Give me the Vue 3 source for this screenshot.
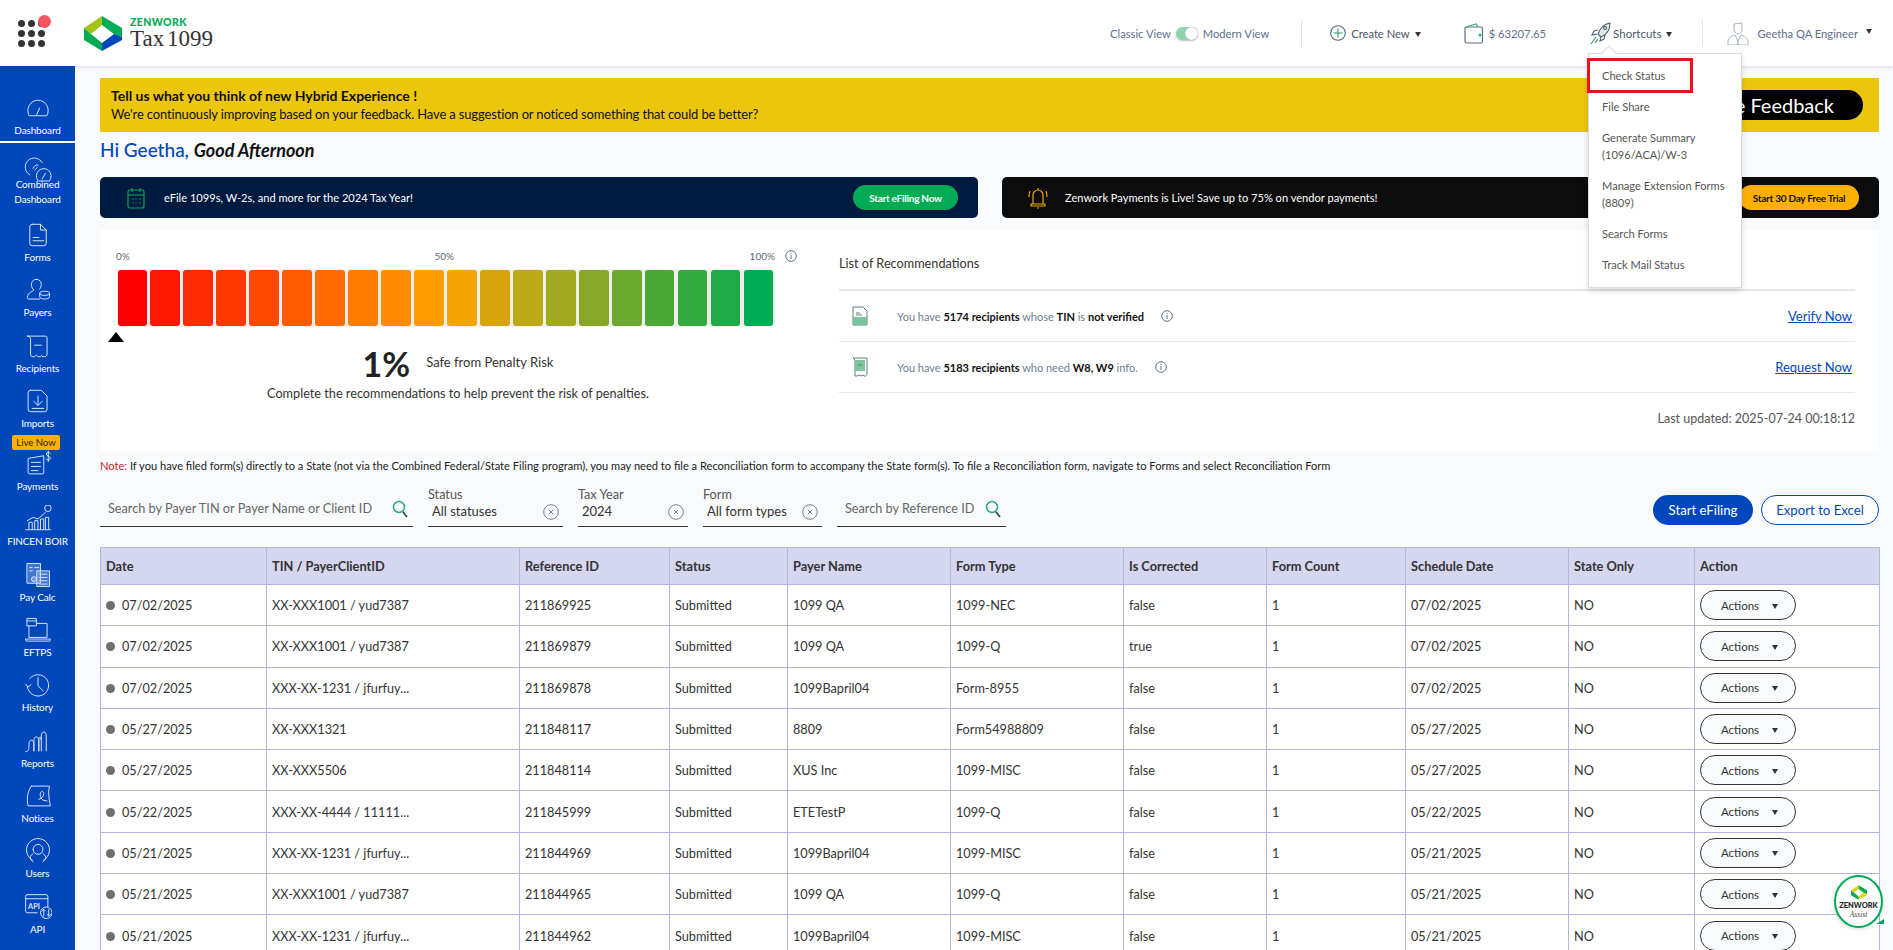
<script setup>
const dots = Array.from({ length: 9 }, (_, i) => i)

const nav = [
  { label: 'Dashboard', cls: 'first', paths: ['M5 25a12.5 12.5 0 1 1 22 0z', 'M14.5 24l3.5-8'] },
  { label: 'Combined Dashboard', cls: 'combined', paths: ['M6 22a11 11 0 1 1 15-15', 'M10 14a5 5 0 0 1 6-4', 'M12 16l3-3', 'M16 29a9 9 0 1 1 14 0z', 'M21 27l4-7'] },
  { label: 'Forms', paths: ['M9 3h10l7 7v16a3 3 0 0 1-3 3H9a3 3 0 0 1-3-3V6a3 3 0 0 1 3-3z', 'M19 3v7h7', 'M10 19h7', 'M10 23h13'] },
  { label: 'Payers', paths: ['M14 3c-4 0-6 3-6 6.500 0 3 1.500 5 3 6.500-1 2-7 2-8 9 0 1 .5 2 2 2h13', 'M14 3c4 0 6 3 6 6.500 0 2-1 4-2 5.500', 'M18 20a6 2.500 0 1 0 12 0a6 2.500 0 1 0-12 0', 'M18 20v4c0 2 3 3 6 3s6-1 6-3v-4'] },
  { label: 'Recipients', paths: ['M3 4h22a2 2 0 0 1 2 2v20c0 2-1 3-3 3h-2', 'M3 4c3 0 4 2 4 4v18c0 2 1 3 3 3h2c1-2 3-2 4 0h3c1-2 2-2 3 0', 'M12 15h8'] },
  { label: 'Imports', paths: ['M7 3h13l7 7v16a3 3 0 0 1-3 3H7a3 3 0 0 1-3-3V6a3 3 0 0 1 3-3z', 'M16 10v11', 'M11 16.500l5 5 5-5', 'M9 25h14'] },
  { label: 'Payments', cls: 'pay', paths: ['M5 9l18-3v21a2 2 0 0 1-2 1H6a2 2 0 0 1-2-2V10z', 'M8 14h11', 'M8 19h11', 'M8 24h8', 'M31 3c-1-1.500-5-1.500-5 1s5 2 5 5-4 2.500-5 1', 'M28.500 0v13'] },
  { label: 'FINCEN BOIR', paths: ['M1 29h30', 'M5 28v-8h4v8', 'M12 28v-10h4v10', 'M19 28v-12h4v12', 'M25 28v-14h4v14', 'M3 18l7-4 6 2 9-8', 'M24 3a4 4 0 1 0 8 0a4 4 0 1 0-8 0'] },
  { label: 'Pay Calc', cls: 'calc', paths: ['M3 2h16v24H3z', 'M6 7h3M6 11h3', 'M12 7h5', 'M8 21a3 3 0 1 0 6 0a3 3 0 1 0-6 0', 'M15 11h15v19H15z', 'M18 15h9M18 19h9M18 23h9M18 27h9'] },
  { label: 'EFTPS', paths: ['M5 11v14h22V8H15', 'M1 27h30v1.500a1 1 0 0 1-1 1H2a1 1 0 0 1-1-1z', 'M3 2h11v9H3z', 'M3 5h11'] },
  { label: 'History', paths: ['M6 8a13 13 0 1 1-3 10', 'M1 15l3 3.500 3.500-3', 'M16 7v10l6 6'] },
  { label: 'Reports', paths: ['M1 29c3 0 4-2 4-7s1-7 3-7 3 2 3 7v6', 'M11 28V16c0-3 1-5 3-5s3 2 3 5v12', 'M20 28V10c0-3 1-5 3-5s3 2 3 5v18M17 28V14c0-2 1-3 1.500-3S20 13 20 15'] },
  { label: 'Notices', paths: ['M8 4h22c-2 6-1 14 1 24H4C2 20 3 10 8 4z', 'M17 20c4-1 6-4 6-7 0-3-3-3-4-1-1 3 0 7 3 9l5 1'] },
  { label: 'Users', paths: ['M9 27a14 14 0 1 1 14 0', 'M10 14a6 6 0 1 1 12 0a6 6 0 1 1-12 0', 'M10 19c-3 2-4 5-3 7l3 3', 'M22 19c3 2 4 5 3 7l-3 3'] },
  { label: 'API', api: true, paths: ['M3 1h23a2 2 0 0 1 2 2v13M15 23H3a2 2 0 0 1-2-2V3a2 2 0 0 1 2-2', 'M1 6h27', 'M19 23a7 7 0 1 0 14 0a7 7 0 1 0-14 0', 'M23 27v-8l-2 2M23 19l2 2', 'M29 19v8l-2-2M29 27l2-2'] }
]

const shortcuts = [
  ['Check Status'],
  ['File Share'],
  ['Generate Summary', '(1096/ACA)/W-3'],
  ['Manage Extension Forms', '(8809)'],
  ['Search Forms'],
  ['Track Mail Status']
]

const barColors = [
  '#ff0000', '#ff1500', '#ff2a00', '#ff3700', '#ff4800', '#ff5a00', '#ff6b00', '#ff7c00', '#ff8c00', '#ff9d00',
  '#f2a504', '#d6a50d', '#bda816', '#a2a81f', '#88a727', '#6da82e', '#4ca835', '#33a93e', '#1fa947', '#00ab55'
]

const filters = [
  { label: 'Status', value: 'All statuses', cls: 'f-status' },
  { label: 'Tax Year', value: '2024', cls: 'f-year' },
  { label: 'Form', value: 'All form types', cls: 'f-form' }
]

const columns = ['Date', 'TIN / PayerClientID', 'Reference ID', 'Status', 'Payer Name', 'Form Type', 'Is Corrected', 'Form Count', 'Schedule Date', 'State Only', 'Action']
const widths = [166, 253, 150, 118, 163, 173, 143, 139, 163, 126, 185]

const rows = [
  ['07/02/2025', 'XX-XXX1001 / yud7387', '211869925', '1099 QA', '1099-NEC', 'false'],
  ['07/02/2025', 'XX-XXX1001 / yud7387', '211869879', '1099 QA', '1099-Q', 'true'],
  ['07/02/2025', 'XXX-XX-1231 / jfurfuy...', '211869878', '1099Bapril04', 'Form-8955', 'false'],
  ['05/27/2025', 'XX-XXX1321', '211848117', '8809', 'Form54988809', 'false'],
  ['05/27/2025', 'XX-XXX5506', '211848114', 'XUS Inc', '1099-MISC', 'false'],
  ['05/22/2025', 'XXX-XX-4444 / 11111...', '211845999', 'ETETestP', '1099-Q', 'false'],
  ['05/21/2025', 'XXX-XX-1231 / jfurfuy...', '211844969', '1099Bapril04', '1099-MISC', 'false'],
  ['05/21/2025', 'XX-XXX1001 / yud7387', '211844965', '1099 QA', '1099-Q', 'false'],
  ['05/21/2025', 'XXX-XX-1231 / jfurfuy...', '211844962', '1099Bapril04', '1099-MISC', 'false']
]
</script>

<template>
  <div class="app">
    <header class="topbar">
      <div class="apps">
        <span v-for="d in dots" :key="d" class="dot"></span>
        <span class="red-dot"></span>
      </div>
      <div class="brand">
        <svg class="logo" viewBox="85 13 38 35" width="38" height="35">
          <polygon points="85,25 103,13 103,22 92,31" fill="#a5c41a" />
          <polygon points="103,13 123,25 123,34 115,31 103,22" fill="#00ab55" />
          <polygon points="123,34 123,37 103,48 103,40 115,31" fill="#0047bb" />
          <polygon points="85,25 92,31 103,40 103,48 85,37" fill="#00ab55" />
        </svg>
        <div class="brand-text">
          <div class="zen">ZENWORK</div>
          <div class="tax">Tax 1099</div>
        </div>
      </div>

      <div class="top-right">
        <div class="view-toggle">
          <span>Classic View</span>
          <span class="switch"><span class="knob"></span></span>
          <span>Modern View</span>
        </div>
        <span class="vdiv d1"></span>
        <div class="top-item create">
          <svg viewBox="0 0 16 16" width="16" height="16" fill="none" stroke="#4a6a80" stroke-width="1.100">
            <circle cx="8" cy="8" r="7.300" />
            <path d="M8 3.500v9M3.500 8h9" stroke="#2f9a6b" />
          </svg>
          <span>Create New</span>
          <span class="caret"></span>
        </div>
        <div class="top-item wallet">
          <svg viewBox="0 0 20 22" width="20" height="22" fill="none" stroke="#55708a" stroke-width="1.200">
            <path d="M2 5h15a1.500 1.500 0 0 1 1.500 1.500v13A1.500 1.500 0 0 1 17 21H3a2 2 0 0 1-2-2V6z" />
            <path d="M2 5l10-3 2 3" stroke="#3aa675" />
            <circle cx="16" cy="13" r="1.500" fill="#3aa675" stroke="none" />
          </svg>
          <span>$ 63207.65</span>
        </div>
        <div class="top-item shortcut">
          <svg viewBox="0 0 22 24" width="22" height="24" fill="none" stroke="#4a6378" stroke-width="1.100">
            <path d="M20 2c-6 1-10 5-12 11l3 3c5-2 9-7 9-14z" fill="#dfe9e6" />
            <path d="M8 9l-4 1-2 4 5-1M15 14l-1 4-4 2 1-4" />
            <path d="M6 16l-5 7M8 18l-3 4" stroke="#2f9a6b" />
            <circle cx="15" cy="7" r="1.500" />
          </svg>
          <span>Shortcuts</span>
          <span class="caret"></span>
        </div>
        <span class="vdiv d2"></span>
        <div class="top-item user">
          <svg viewBox="0 0 22 24" width="22" height="24" fill="none" stroke="#a9b4bd" stroke-width="1">
            <path d="M7 3l8-1v6c0 3-2 5-4 5s-4-2-4-5z" />
            <path d="M1 24v-4c0-3 4-5 7-6l3 6 3-6c3 1 7 3 7 6v4z" />
            <path d="M11 20v4" stroke="#62b28d" />
          </svg>
          <span>Geetha QA Engineer</span>
          <span class="caret up"></span>
        </div>
      </div>
    </header>

    <div class="layout">
      <nav class="sidebar">
        <div v-for="item in nav" :key="item.label" class="nav-item" :class="item.cls">
          <span v-if="item.cls === 'pay'" class="live">Live Now</span>
          <svg class="nav-icon" viewBox="-1 -1 34 34" width="28" height="28" fill="none" stroke-linecap="round" stroke-linejoin="round">
            <path v-for="(p, i) in item.paths" :key="i" :d="p" />
            <text v-if="item.api" x="4" y="18" class="api-text">API</text>
          </svg>
          <span class="nav-label">{{ item.label }}</span>
        </div>
      </nav>

      <main class="main">
        <section class="feedback">
          <div>
            <div class="fb-title">Tell us what you think of new Hybrid Experience !</div>
            <div class="fb-sub">We're continuously improving based on your feedback. Have a suggestion or noticed something that could be better?</div>
          </div>
          <button class="fb-btn">Share Feedback</button>
        </section>

        <h1 class="greeting">Hi Geetha, <em>Good Afternoon</em></h1>

        <div class="promos">
          <div class="promo navy">
            <svg class="promo-icon" viewBox="0 0 18 22" width="18" height="22" fill="none" stroke="#00a755" stroke-width="1.200">
              <rect x="1" y="3" width="16" height="18" rx="2" />
              <path d="M1 8h16M5 1v4M13 1v4" />
              <path d="M5 12h1.500M8.300 12h1.500M12 12h1.500M5 16h1.500M8.300 16h1.500M12 16h1.500" stroke-dasharray="1.500 1" />
            </svg>
            <span class="promo-text">eFile 1099s, W-2s, and more for the 2024 Tax Year!</span>
            <button class="promo-btn green">Start eFiling Now</button>
          </div>
          <div class="promo black">
            <svg class="promo-icon bell" viewBox="0 0 20 24" width="20" height="24" fill="none" stroke="#f0a500" stroke-width="1.200">
              <path d="M5 18V9a5 5 0 0 1 10 0v9" />
              <path d="M3 18h14v2H3z" />
              <path d="M10 2v2M9 22h2M2 5C1 7 1 9 1 11M18 5c1 2 1 4 1 6" />
            </svg>
            <span class="promo-text">Zenwork Payments is Live! Save up to 75% on vendor payments!</span>
            <button class="promo-btn amber">Start 30 Day Free Trial</button>
          </div>
        </div>

        <section class="risk-card">
          <div class="gauge">
            <div class="scale">
              <div class="scale-labels"><span>0%</span><span class="mid">50%</span><span>100%</span></div>
              <svg class="info" viewBox="0 0 12 12" width="12" height="12" fill="none" stroke="#5a7488">
                <circle cx="6" cy="6" r="5.300" /><path d="M6 5v4M6 3v1" />
              </svg>
            </div>
            <div class="bars">
              <span v-for="c in barColors" :key="c" class="bar" :style="{ background: c }"></span>
            </div>
            <div class="marker"></div>
            <div class="score">
              <span class="pct">1%</span>
              <span class="safe">Safe from Penalty Risk</span>
            </div>
            <p class="complete">Complete the recommendations to help prevent the risk of penalties.</p>
          </div>

          <div class="recs">
            <div class="recs-title">List of Recommendations</div>
            <div class="rec">
              <svg class="rec-icon" viewBox="0 0 16 20" width="16" height="20" fill="none" stroke="#5c7a80">
                <path d="M1 1h10l4 4v14H1z" />
                <path d="M1 11h14v8H1z" fill="#7cc49b" stroke="none" />
                <path d="M4 7h4M4 9h6" />
              </svg>
              <span class="rec-text">You have <b>5174 recipients</b> whose <b>TIN</b> is <b>not verified</b></span>
              <svg class="info i1" viewBox="0 0 12 12" width="12" height="12" fill="none" stroke="#5a7488">
                <circle cx="6" cy="6" r="5.300" /><path d="M6 5v4M6 3v1" />
              </svg>
              <a class="rec-link">Verify Now</a>
            </div>
            <div class="rec">
              <svg class="rec-icon" viewBox="0 0 16 20" width="16" height="20" fill="none" stroke="#5c7a80">
                <path d="M1 1h14v15c0 2-1 3-2 3h-1l-1-1-2 1-2-1-2 1H3V3z" />
                <rect x="3" y="3" width="10" height="11" fill="#7cc49b" stroke="none" />
                <path d="M6 8h4" />
              </svg>
              <span class="rec-text">You have <b>5183 recipients</b> who need <b>W8, W9</b> info.</span>
              <svg class="info i2" viewBox="0 0 12 12" width="12" height="12" fill="none" stroke="#5a7488">
                <circle cx="6" cy="6" r="5.300" /><path d="M6 5v4M6 3v1" />
              </svg>
              <a class="rec-link">Request Now</a>
            </div>
            <div class="updated">Last updated: 2025-07-24 00:18:12</div>
          </div>
        </section>

        <p class="note"><span>Note:</span> If you have filed form(s) directly to a State (not via the Combined Federal/State Filing program), you may need to file a Reconciliation form to accompany the State form(s). To file a Reconciliation form, navigate to Forms and select Reconciliation Form</p>

        <div class="filters">
          <div class="search s1">
            <span>Search by Payer TIN or Payer Name or Client ID</span>
            <svg viewBox="0 0 16 18" width="16" height="18" fill="none"><circle cx="7" cy="7" r="5.500" stroke="#2fa585" stroke-width="1.500" /><path d="M11 12l4 5" stroke="#2d4a66" stroke-width="1.800" /></svg>
          </div>
          <div v-for="f in filters" :key="f.label" class="select" :class="f.cls">
            <label>{{ f.label }}</label>
            <div class="select-val">
              <span>{{ f.value }}</span>
              <svg viewBox="0 0 16 16" width="16" height="16" fill="none" stroke="#6e8296"><circle cx="8" cy="8" r="7.300" /><path d="M6 6l4 4M10 6l-4 4" /></svg>
            </div>
          </div>
          <div class="search s2">
            <span>Search by Reference ID</span>
            <svg viewBox="0 0 16 18" width="16" height="18" fill="none"><circle cx="7" cy="7" r="5.500" stroke="#2fa585" stroke-width="1.500" /><path d="M11 12l4 5" stroke="#2d4a66" stroke-width="1.800" /></svg>
          </div>
          <div class="actions">
            <button class="btn solid">Start eFiling</button>
            <button class="btn outline">Export to Excel</button>
          </div>
        </div>

        <table class="grid">
          <colgroup><col v-for="(w, i) in widths" :key="i" :width="w" /></colgroup>
          <thead>
            <tr><th v-for="c in columns" :key="c">{{ c }}</th></tr>
          </thead>
          <tbody>
            <tr v-for="(r, i) in rows" :key="i">
              <td><span class="status-dot"></span>{{ r[0] }}</td>
              <td>{{ r[1] }}</td>
              <td>{{ r[2] }}</td>
              <td>Submitted</td>
              <td>{{ r[3] }}</td>
              <td>{{ r[4] }}</td>
              <td>{{ r[5] }}</td>
              <td>1</td>
              <td>{{ r[0] }}</td>
              <td>NO</td>
              <td><button class="row-action">Actions<span class="caret dark"></span></button></td>
            </tr>
          </tbody>
        </table>
      </main>
    </div>

    <div class="menu">
      <span class="notch"></span>
      <div v-for="s in shortcuts" :key="s[0]" class="menu-item">
        <div v-for="line in s" :key="line">{{ line }}</div>
      </div>
      <span class="highlight"></span>
    </div>

    <div class="assist">
      <svg viewBox="85 13 38 35" width="16" height="15">
        <polygon points="85,25 103,13 103,22 92,31" fill="#e3d21a" />
        <polygon points="103,13 123,25 123,34 115,31 103,22" fill="#00ab55" />
        <polygon points="123,34 123,37 103,48 103,40 115,31" fill="#e3d21a" />
        <polygon points="85,25 92,31 103,40 103,48 85,37" fill="#00ab55" />
      </svg>
      <div class="assist-name">ZENWORK</div>
      <div class="assist-sub">Assist</div>
      <span class="assist-tail"></span>
    </div>
  </div>
</template>

<style>
html, body { margin: 0; overflow: hidden; background: #f9fafc; }
</style>

<style scoped>
.app { position: relative; height: 950px; overflow: hidden; font-family: Lato, "Liberation Sans", sans-serif; color: #222; background: #f9fafc; }
button { font-family: inherit; cursor: pointer; border: 0; }
.topbar { display: flex; align-items: center; height: 66px; padding-left: 18px; background: #fff; box-shadow: 0 1px 4px rgba(40, 60, 110, .14); position: relative; z-index: 2; box-sizing: border-box; }
.apps { position: relative; display: grid; grid-template-columns: repeat(3, 7px); gap: 3px; }
.dot { width: 7px; height: 7px; border-radius: 50%; background: #333; }
.red-dot { position: absolute; left: 20px; top: -5px; width: 13px; height: 13px; border-radius: 50%; background: #f4565e; }
.brand { display: flex; align-items: center; margin-left: 39px; }
.logo { display: block; }
.brand-text { margin-left: 8px; }
.zen { font-size: 10.500px; line-height: 11px; font-weight: 900; color: #00ab55; letter-spacing: .4px; }
.tax { font-family: "Liberation Serif", serif; font-size: 23px; line-height: 22px; color: #333; word-spacing: -3px; }
.top-right { display: flex; align-items: center; margin-left: auto; padding-right: 21px; font-size: 11.200px; color: #5c6f8c; }
.view-toggle { display: flex; align-items: center; gap: 5px; }
.switch { position: relative; display: block; width: 22px; height: 13px; border-radius: 7px; background: #8fd4af; box-shadow: 0 1px 2px rgba(0, 0, 0, .25); }
.knob { position: absolute; right: 0; top: 0; width: 13px; height: 13px; border-radius: 50%; background: #fff; box-shadow: 0 0 1px rgba(0, 0, 0, .4); }
.vdiv { display: block; width: 1px; height: 27px; background: #e2e4e8; }
.d1 { margin: 0 28px 0 32px; }
.d2 { margin: 0 24px 0 30px; }
.top-item { display: flex; align-items: center; gap: 5px; color: #4a5568; }
.wallet { margin: 0 44px 0 43px; color: #5c6f8c; }
.shortcut { font-size: 11.500px; gap: 1px; }
.shortcut .caret { margin-left: 4px; }
.caret { display: inline-block; width: 0; height: 0; border-left: 3.500px solid transparent; border-right: 3.500px solid transparent; border-top: 5px solid #333; margin-top: 3px; }
.caret.up { margin: -3px 0 0 0; }
.user { color: #5c6f8c; gap: 8px; }
.layout { display: flex; height: 884px; }
.sidebar { flex: 0 0 75px; background: #0047bb; padding-top: 22px; box-sizing: border-box; height: 100%; display: flex; flex-direction: column; align-items: stretch; }
.nav-item { position: relative; height: 55.300px; display: flex; flex-direction: column; align-items: center; padding-top: 6px; box-sizing: border-box; flex: none; }
.nav-item.first { border-bottom: 2px solid #fff; height: 55px; }
.nav-item.combined { height: 72px; padding-top: 13px; }
.nav-item.combined .nav-label { margin-top: -7px; width: 56px; line-height: 15px; }
.nav-item.pay { margin-top: 8px; }
.nav-icon { display: block; stroke: #d8e4fb; stroke-width: 1.200; flex: none; }
.nav-item.calc .nav-icon { fill: rgba(180, 205, 245, .35); }
.api-text { font-family: Lato, sans-serif; font-size: 9px; fill: #d8e4fb; stroke: none; font-weight: 700; }
.nav-label { display: block; margin-top: 0; font-size: 10px; letter-spacing: -.15px; line-height: 16px; color: #fff; text-align: center; }
.live { position: absolute; left: 12px; top: -9px; z-index: 1; width: 48px; height: 15px; line-height: 15px; text-align: center; background: #fdb000; border-radius: 2px; font-size: 9.500px; color: #222; }
.main { flex: 1; min-width: 0; padding: 12px 14px 0 25px; box-sizing: border-box; }
.feedback { display: flex; align-items: center; justify-content: space-between; height: 54px; padding: 0 16px 0 11px; background: #ecc50d; box-sizing: border-box; color: #111; }
.fb-title { font-size: 14px; line-height: 19px; font-weight: 700; }
.fb-sub { font-size: 13px; letter-spacing: -.15px; line-height: 19px; }
.fb-btn { height: 30px; padding: 0 29px; border-radius: 15px; background: #000; color: #fff; font-size: 20px; line-height: 30px; }
.greeting { margin: 0 0 9px; height: 36px; line-height: 36px; font-size: 19px; font-weight: 500; color: #0047bb; }
.greeting em { font-size: 18px; font-weight: 700; color: #111; }
.promos { display: flex; justify-content: space-between; }
.promo { display: flex; align-items: center; height: 41px; border-radius: 5px; box-sizing: border-box; color: #fff; font-size: 11.100px; }
.navy { width: 878px; background: #001a40; padding: 0 20px 0 27px; }
.black { width: 877px; background: #0c0c0c; padding: 0 20px 0 26px; }
.promo-text { margin-left: 19px; }
.bell + .promo-text { margin-left: 17px; }
.promo-btn { margin-left: auto; height: 25px; border-radius: 13px; font-size: 10px; font-weight: 700; letter-spacing: -.25px; padding: 0; }
.green { width: 105px; background: #00ab55; color: #fff; }
.amber { width: 120px; background: #fdb000; color: #111; }
.risk-card { display: flex; height: 221px; margin-top: 12px; background: #fff; padding: 20px 24px 0 0; box-sizing: border-box; }
.gauge { flex: 0 0 739px; }
.scale { display: flex; align-items: center; margin-left: 16px; width: 681px; }
.scale-labels { flex: 0 0 659px; display: flex; justify-content: space-between; font-size: 10px; line-height: 12px; color: #5a6a7a; }
.mid { margin-left: 9px; }
.info { flex: none; display: block; }
.scale .info { margin-left: 10px; }
.bars { display: flex; gap: 3.500px; width: 656px; margin: 8px 0 0 17.500px; background: #eee; box-shadow: 0 0 0 1px #f2f2f2; border-radius: 3px; }
.bar { flex: 1; height: 56px; border-radius: 3px; }
.marker { width: 0; height: 0; margin: 6px 0 0 8px; border-left: 8px solid transparent; border-right: 8px solid transparent; border-bottom: 10px solid #000; }
.score { display: flex; align-items: center; justify-content: center; width: 716px; height: 44px; }
.pct { font-size: 34px; line-height: 44px; font-weight: 700; color: #222; }
.safe { margin: 0 0 4px 16px; font-size: 13px; color: #333; }
.complete { width: 716px; margin: -2px 0 0; text-align: center; font-size: 12.700px; line-height: 18px; color: #333; }
.recs { flex: 1; margin-top: -20px; }
.recs-title { height: 59px; line-height: 66px; border-bottom: 2px solid #e6e6e6; font-size: 12.700px; color: #333; }
.rec { display: flex; align-items: center; height: 50px; padding-left: 13px; border-bottom: 1px solid #e6e6e6; font-size: 11px; color: #6a7f90; }
.rec-text { margin-left: 29px; }
.rec-text b { color: #111; }
.i1, .i2 { margin-left: 17px; }
.rec-link { margin-left: auto; margin-right: 3px; font-size: 13px; color: #0047bb; text-decoration: underline; }
.updated { margin-top: 16px; text-align: right; font-size: 12.500px; line-height: 20px; color: #555; }
.note { margin: 0; height: 30px; line-height: 30px; font-size: 11.100px; color: #222; white-space: nowrap; }
.note span { color: #c0272d; }
.filters { display: flex; align-items: flex-end; gap: 15px; height: 46px; }
.search { display: flex; align-items: flex-start; justify-content: space-between; height: 33px; padding: 4px 5px 0 8px; border-bottom: 1.500px solid #333; box-sizing: border-box; font-size: 12.700px; line-height: 20px; color: #666; }
.s1 { width: 313px; }
.s2 { width: 169px; }
.search svg { margin-top: 2px; flex: none; }
.select { height: 46px; border-bottom: 1.500px solid #333; box-sizing: border-box; }
.select label { display: block; font-size: 12.700px; line-height: 16px; color: #555; margin-top: 5px; }
.select-val { display: flex; align-items: center; justify-content: space-between; padding: 0 4px; font-size: 13px; line-height: 19px; color: #333; }
.f-status { width: 135px; }
.f-year { width: 110px; }
.f-form { width: 119px; }
.actions { display: flex; gap: 8px; margin: 0 0 2px auto; }
.btn { height: 30px; border-radius: 15px; font-size: 13.200px; box-sizing: border-box; }
.solid { width: 100px; background: #0047bb; color: #fff; }
.outline { width: 118px; background: #fff; color: #0047bb; border: 1px solid #0047bb; }
.grid { width: 1779px; margin-top: 20px; border-collapse: collapse; table-layout: fixed; font-size: 12.700px; color: #333; background: #fff; }
.grid th, .grid td { border: 1px solid #b4b6dd; padding: 0 0 0 5px; text-align: left; white-space: nowrap; overflow: hidden; box-sizing: border-box; }
.grid th { height: 37px; background: #d5d6f0; font-size: 12.800px; font-weight: 700; color: #333; }
.grid td { height: 41.300px; }
.status-dot { display: inline-block; width: 9px; height: 9px; margin: 0 7px 0 0; border-radius: 50%; background: #707070; }
.row-action { display: flex; align-items: center; justify-content: center; gap: 13px; width: 96px; height: 30px; border: 1px solid #333; border-radius: 15px; background: #f9fafc; color: #333; font-size: 11.500px; padding: 0 0 0 3px; }
.caret.dark { margin-top: 2px; }
.menu { position: absolute; left: 1588px; top: 53px; z-index: 5; width: 154px; height: 235px; padding-top: 6px; box-sizing: border-box; background: #fff; border: 1px solid #dcdcdc; box-shadow: 0 3px 6px rgba(0, 0, 0, .14); }
.notch { position: absolute; left: 14px; top: -6px; width: 11px; height: 11px; background: #fff; border-left: 1px solid #dcdcdc; border-top: 1px solid #dcdcdc; transform: rotate(45deg); }
.menu-item { padding: 7px 4px 7px 13px; font-size: 11.100px; line-height: 17px; color: #555; }
.highlight { position: absolute; left: -2px; top: 4px; width: 106px; height: 35px; border: 3px solid #e8141c; box-sizing: border-box; pointer-events: none; }
.assist { position: absolute; left: 1834px; top: 875px; z-index: 4; width: 49px; height: 53px; box-sizing: border-box; border: 2px solid #00ab55; border-radius: 50%; background: #fff; box-shadow: 0 1px 4px rgba(0, 0, 0, .15); display: flex; flex-direction: column; align-items: center; padding-top: 8px; }
.assist-name { font-size: 7.500px; line-height: 9px; font-weight: 900; color: #222; margin-top: 1px; }
.assist-sub { font-family: "Liberation Serif", serif; font-style: italic; font-size: 7.500px; line-height: 9px; color: #444; }
.assist-tail { position: absolute; right: -3px; bottom: 2px; width: 0; height: 0; border-left: 8px solid transparent; border-bottom: 5px solid #00ab55; }
</style>
